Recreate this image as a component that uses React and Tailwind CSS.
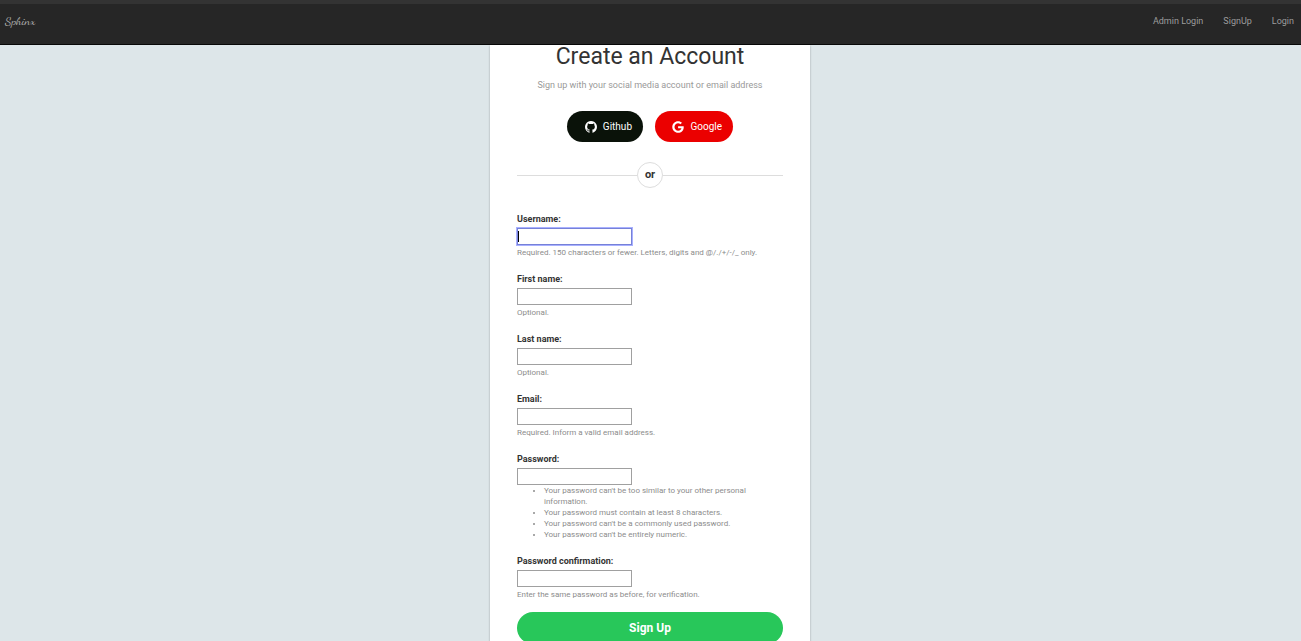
import { FaGoogle } from "react-icons/fa";

const navLinks = ["Admin Login", "SignUp", "Login"];

const passwordRules = [
  "Your password can't be too similar to your other personal information.",
  "Your password must contain at least 8 characters.",
  "Your password can't be a commonly used password.",
  "Your password can't be entirely numeric.",
];

function GithubIcon({ className }) {
  return (
    <svg viewBox="128 128 1536 1536" fill="currentColor" aria-hidden="true" className={className}>
      <path d="M896 128q209 0 385.5 103t279.5 279.5 103 385.5q0 251-146.5 451.5t-378.5 277.5q-27 5-40-7t-13-30q0-3 .5-76.5t.5-134.5q0-97-52-142 57-6 102.5-18t94-39 81-66.5 53-105 20.5-150.5q0-119-79-206 37-91-8-204-28-9-81 11t-92 44l-38 24q-93-26-192-26t-192 26q-16-11-42.5-27t-83.5-38.5-85-13.5q-45 113-8 204-79 87-79 206 0 85 20.5 150t52.5 105 80.5 67 94 39 102.5 18q-39 36-49 103-21 10-45 15t-57 5-65.5-21.5-55.5-62.5q-19-32-48.5-52t-49.5-24l-20-3q-21 0-29 4.5t-5 11.5 9 14 13 12l7 5q22 10 43.5 38t31.5 51l10 23q13 38 44 61.5t67 30 69.5 7 55.5-3.5l23-4q0 38 .5 88.5t.5 54.5q0 18-13 30t-40 7q-232-77-378.5-277.5t-146.5-451.5q0-209 103-385.5t279.5-279.5 385.5-103z" />
    </svg>
  );
}

function Field({ id, label, type = "text", help, rules, autoFocus }) {
  return (
    <div className="flex flex-col items-start">
      <label htmlFor={id} className="mb-[3px] text-[9px] leading-3 font-bold text-[#333]">
        {label}:
      </label>
      <div className="relative flex">
        <input
          id={id}
          name={id}
          type={type}
          autoFocus={autoFocus}
          aria-describedby={`${id}-help`}
          className="peer h-[17px] w-[115px] border border-[#a0a0a0] bg-white px-0.5 text-[9px] text-black caret-transparent outline-none focus:border-[#7681d8] focus:ring-1 focus:ring-[#a9b1ff]"
          placeholder=" "
        />
        <span
          aria-hidden="true"
          className="pointer-events-none absolute inset-y-[3px] left-px hidden w-px bg-black peer-focus:peer-placeholder-shown:block"
        />
      </div>
      {rules ? (
        <ul id={`${id}-help`} className="list-disc pl-[27px] text-[8px] leading-[11px] text-[#8c8c8c]">
          {rules.map((rule) => (
            <li key={rule}>{rule}</li>
          ))}
        </ul>
      ) : (
        <p id={`${id}-help`} className="mt-0.5 text-[8px] leading-[11px] text-[#8c8c8c]">
          {help}
        </p>
      )}
    </div>
  );
}

export default function App() {
  return (
    <div className="flex h-screen flex-col overflow-y-auto bg-[#dde6e9] font-['Roboto',sans-serif] [scrollbar-width:none]">
      <header className="flex h-[45px] shrink-0 items-center justify-between border-t-4 border-b border-t-[#333] border-b-[#080808] bg-[#262626] pr-[7px] pb-1.5 pl-[5px]">
        <a href="#" className="font-['Dancing_Script',cursive] text-xs leading-4 text-[#b0b0b0]">
          Sphinx
        </a>
        <nav className="flex gap-5 text-[9px] leading-4 text-[#9d9d9d]">
          {navLinks.map((link) => (
            <a key={link} href="#">
              {link}
            </a>
          ))}
        </nav>
      </header>

      <main className="shrink-0 pr-px">
        <section className="mx-auto w-full max-w-[320px] bg-white px-[27px] pb-8 shadow-[0_1px_2px_rgba(0,0,0,0.3)]">
          <h1 className="text-center text-[23px] leading-6 text-[#333]">Create an Account</h1>
          <p className="mt-2.5 text-center text-[9px] leading-3 text-[#999]">
            Sign up with your social media account or email address
          </p>

          <div className="mt-5 flex justify-center gap-3 text-[10px] text-white">
            <button type="button" className="flex h-[31px] w-[76px] items-center justify-end gap-1.5 rounded-full bg-[#0a1209] pr-[11px]">
              <GithubIcon className="size-3" />
              Github
            </button>
            <button type="button" className="flex h-[31px] w-[78px] items-center justify-end gap-1.5 rounded-full bg-[#eb0000] pr-[11px]">
              <FaGoogle className="size-3" />
              Google
            </button>
          </div>

          <div className="mt-5 flex items-center">
            <span className="h-px flex-1 bg-[#ddd]" />
            <span className="flex size-[26px] items-center justify-center rounded-full border border-[#ddd] text-[11px] font-bold text-[#333]">
              or
            </span>
            <span className="h-px flex-1 bg-[#ddd]" />
          </div>

          <form className="mt-[25px]" onSubmit={(event) => event.preventDefault()}>
            <div className="flex flex-col gap-[15px]">
              <Field
                id="username"
                label="Username"
                help="Required. 150 characters or fewer. Letters, digits and @/./+/-/_ only."
                autoFocus
              />
              <Field id="first_name" label="First name" help="Optional." />
              <Field id="last_name" label="Last name" help="Optional." />
              <Field id="email" label="Email" type="email" help="Required. Inform a valid email address." />
              <Field id="password1" label="Password" type="password" rules={passwordRules} />
              <Field
                id="password2"
                label="Password confirmation"
                type="password"
                help="Enter the same password as before, for verification."
              />
            </div>
            <button type="submit" className="mt-3 h-8 w-full rounded-full bg-[#28c75a] text-xs font-bold text-white">
              Sign Up
            </button>
          </form>
        </section>
      </main>
    </div>
  );
}
